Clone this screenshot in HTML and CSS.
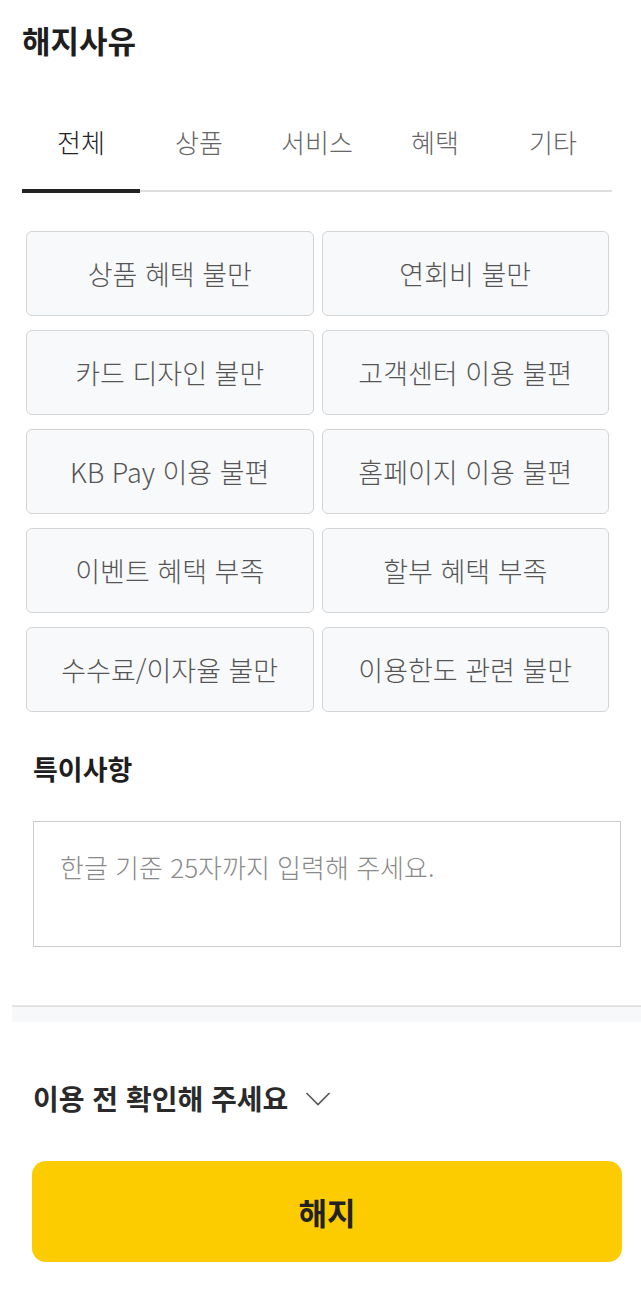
FILE: index.html
```html
<!DOCTYPE html>
<html lang="ko">

<head>
    <meta charset="utf-8">
    <title>해지사유</title>
    <link rel="stylesheet" href="styles.css">
</head>

<body>
    <div class="page">
        <h1 class="title">해지사유</h1>

        <div class="tabs">
            <div class="tab active">전체</div>
            <div class="tab">상품</div>
            <div class="tab">서비스</div>
            <div class="tab">혜택</div>
            <div class="tab">기타</div>
        </div>

        <div class="reason-grid">
            <button type="button" class="reason">상품 혜택 불만</button>
            <button type="button" class="reason">연회비 불만</button>
            <button type="button" class="reason">카드 디자인 불만</button>
            <button type="button" class="reason">고객센터 이용 불편</button>
            <button type="button" class="reason">KB Pay 이용 불편</button>
            <button type="button" class="reason">홈페이지 이용 불편</button>
            <button type="button" class="reason">이벤트 혜택 부족</button>
            <button type="button" class="reason">할부 혜택 부족</button>
            <button type="button" class="reason">수수료/이자율 불만</button>
            <button type="button" class="reason">이용한도 관련 불만</button>
        </div>

        <h2 class="section-title">특이사항</h2>
        <div class="memo">
            <textarea class="memo-input" placeholder="한글 기준 25자까지 입력해 주세요."></textarea>
        </div>

        <div class="divider"></div>

        <div class="notice">
            <span>이용 전 확인해 주세요</span>
            <svg class="chevron" width="26" height="16" viewBox="0 0 26 16">
                <path d="M1.5 2 L13 13.5 L24.5 2" fill="none" stroke="#555" stroke-width="1.6" />
            </svg>
        </div>

        <div class="submit-wrap">
            <button type="button" class="submit">해지</button>
        </div>

        <!-- watermark over the screenshot -->
        <div class="watermark">
            <div class="wm-big">게코아리 (Gecko-Ari)</div>
            <div class="wm-small">https://gecko-ari.tistory.com</div>
        </div>
    </div>
</body>

</html>
```

FILE: styles.css
```css
body {
    margin: 0;
    padding: 0;
    background-color: #fff;
    font-family: "Noto Sans CJK KR", "Noto Sans", sans-serif;
    color: #222;
}

.page {
    position: relative;
    width: 641px;
    min-height: 1289px;
}

.title {
    margin: 0;
    padding: 20px 0 0 22px;
    font-size: 31px;
    line-height: 40px;
    font-weight: bold;
    color: #1e1e1e;
}

.tabs {
    display: flex;
    margin: 44px 29px 0 22px;
    border-bottom: 2px solid #dedede;
}

.tab {
    flex: 1;
    text-align: center;
    padding: 20px 0 29px;
    font-size: 26px;
    line-height: 36px;
    font-weight: 300;
    color: #666;
    border-bottom: 4px solid transparent;
    margin-bottom: -3px;
}

.tab.active {
    color: #222;
    border-bottom-color: #222;
}

.reason-grid {
    display: grid;
    grid-template-columns: 1fr 1fr;
    gap: 14px 8px;
    padding: 39px 32px 0 26px;
}

.reason {
    height: 85px;
    background-color: #f8f9fb;
    border: 1.5px solid #d3d4d6;
    border-radius: 6px;
    font-family: inherit;
    font-size: 27px;
    font-weight: 300;
    color: #555;
    cursor: pointer;
}

.section-title {
    margin: 38px 0 0 33px;
    font-size: 27px;
    line-height: 38px;
    font-weight: bold;
    color: #1e1e1e;
}

.memo {
    padding: 33px 20px 0 33px;
}

.memo-input {
    display: block;
    box-sizing: border-box;
    width: 100%;
    height: 126px;
    padding: 27px 26px;
    border: 1.5px solid #cbcbcb;
    border-radius: 0;
    font-family: inherit;
    font-size: 26px;
    line-height: 36px;
    font-weight: 300;
    resize: none;
}

.memo-input::placeholder {
    color: #8a8a8a;
}

.divider {
    margin: 58px 0 0 12px;
    height: 15px;
    border-top: 2px solid #e3e3e3;
    background-color: #f7f8fa;
}

.notice {
    display: flex;
    align-items: center;
    gap: 17px;
    margin: 57px 0 0 33px;
    font-size: 28px;
    line-height: 38px;
    font-weight: bold;
    color: #2a2a2a;
}

.chevron {
    margin-top: 2px;
}

.submit-wrap {
    padding: 44px 19px 0 32px;
}

.submit {
    width: 100%;
    height: 101px;
    background-color: #fccb00;
    border: none;
    border-radius: 14px;
    font-family: inherit;
    font-size: 31px;
    font-weight: bold;
    color: #222;
    cursor: pointer;
}

.watermark {
    position: absolute;
    top: 192px;
    left: 150px;
    width: 440px;
    text-align: center;
    white-space: nowrap;
    font-family: "DejaVu Sans Mono", monospace;
    font-weight: bold;
    color: rgba(0, 0, 0, 0.025);
    pointer-events: none;
}

.wm-big {
    font-size: 33px;
    line-height: 40px;
    letter-spacing: -1px;
}

.wm-small {
    margin-top: 66px;
    font-size: 22px;
    line-height: 28px;
}
```
